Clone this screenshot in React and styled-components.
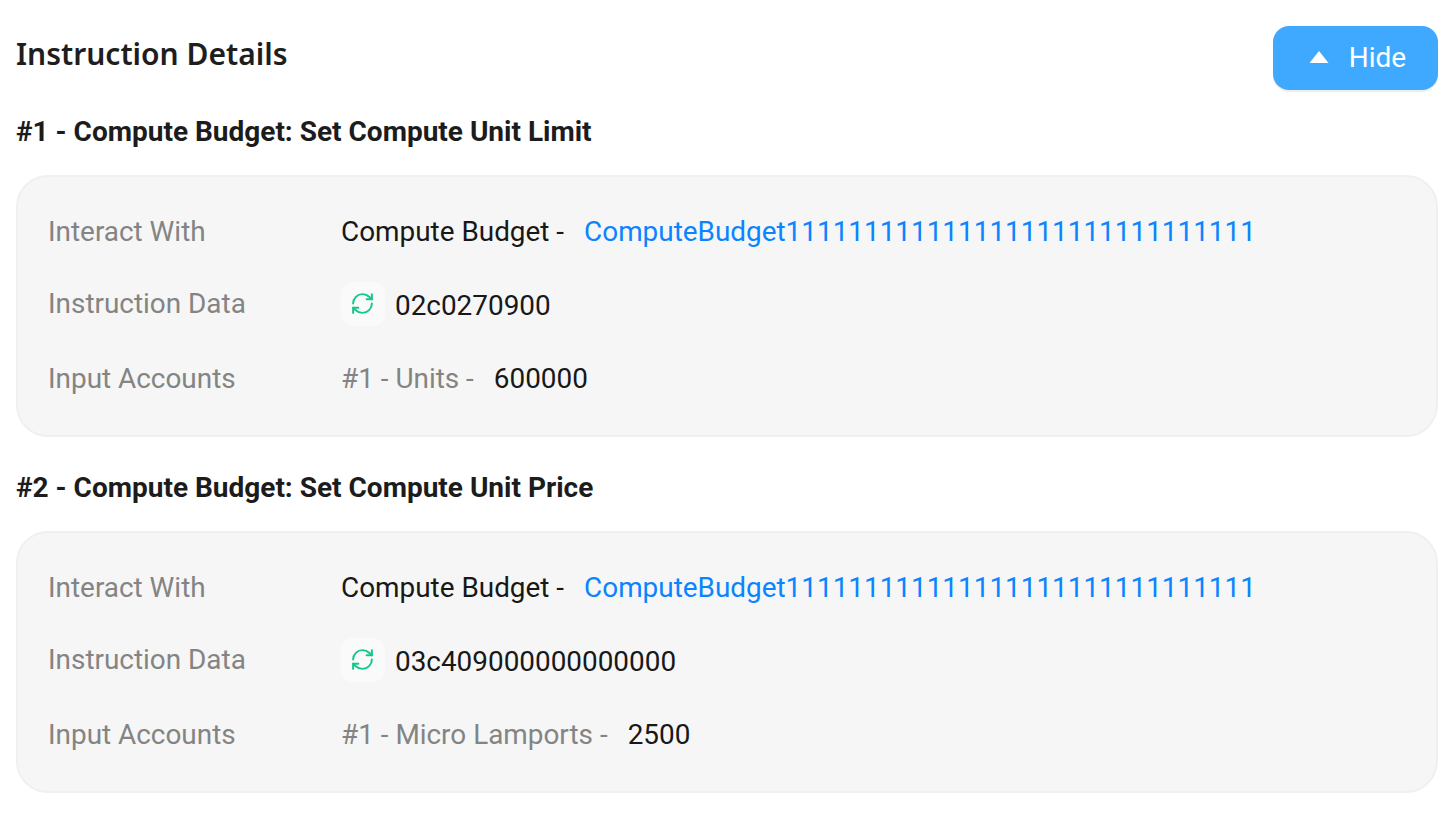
import React from 'react';
import styled, { createGlobalStyle } from 'styled-components';
import { RefreshCw } from 'lucide-react';

const GlobalStyle = createGlobalStyle`
  html, body {
    margin: 0;
    padding: 0;
    background: #fff;
    font-family: Roboto, "Liberation Sans", sans-serif;
  }
`;

const instructions = [
  {
    title: '#1 - Compute Budget: Set Compute Unit Limit',
    data: '02c0270900',
    account: '#1 - Units -',
    value: '600000',
  },
  {
    title: '#2 - Compute Budget: Set Compute Unit Price',
    data: '03c409000000000000',
    account: '#1 - Micro Lamports -',
    value: '2500',
  },
];

const App = () => {
  return (
    <Page>
      <GlobalStyle />
      <Header>
        <Title>Instruction Details</Title>
        <HideButton>
          <Caret viewBox="0 0 20 14">
            <path d="M10 1 L19.5 13 H0.5 Z" fill="#fff" />
          </Caret>
          Hide
        </HideButton>
      </Header>
      {instructions.map((item) => (
        <Section key={item.title}>
          <SectionTitle>{item.title}</SectionTitle>
          <Card>
            <Row>
              <Label>Interact With</Label>
              <Value>
                Compute Budget -
                <ProgramLink href="#">ComputeBudget111111111111111111111111111111</ProgramLink>
              </Value>
            </Row>
            <DataRow>
              <DataLabel>Instruction Data</DataLabel>
              <Value>
                <IconBox>
                  <RefreshCw size={25} color="#14c88c" strokeWidth={1.9} />
                </IconBox>
                <DataText>{item.data}</DataText>
              </Value>
            </DataRow>
            <Row>
              <Label>Input Accounts</Label>
              <Value>
                <Muted>{item.account}</Muted>
                {item.value}
              </Value>
            </Row>
          </Card>
        </Section>
      ))}
    </Page>
  );
};

const Page = styled.div`
  width: 1456px;
  height: 813px;
  box-sizing: border-box;
  padding: 26px 18px 0 16px;
  overflow: hidden;
  color: #1c1c1c;
`;

const Header = styled.div`
  display: flex;
  justify-content: space-between;
  align-items: flex-start;
  height: 64px;
`;

const Title = styled.h2`
  margin: 8px 0 0;
  font-family: "Noto Sans", sans-serif;
  font-size: 30px;
  line-height: 40px;
  font-weight: 600;
  color: #1e1e1e;
`;

const HideButton = styled.button`
  display: flex;
  align-items: center;
  justify-content: center;
  gap: 20px;
  width: 165px;
  height: 64px;
  padding: 0 0 2px 4px;
  border: none;
  border-radius: 16px;
  background: #3fa9ff;
  box-shadow: 0 2px 0 #eeeeee;
  color: #fff;
  font-family: Roboto, sans-serif;
  font-size: 28px;
  cursor: pointer;
`;

const Caret = styled.svg`
  width: 20px;
  height: 14px;
`;

const Section = styled.section`
  margin-bottom: 9px;
`;

const SectionTitle = styled.h3`
  margin: 0;
  height: 85px;
  box-sizing: border-box;
  padding-top: 26px;
  font-family: Roboto, sans-serif;
  font-size: 28px;
  line-height: 32px;
  font-weight: 700;
  color: #1c1c1c;
`;

const Card = styled.div`
  height: 262px;
  box-sizing: border-box;
  padding: 18px 30px 0;
  border: 2px solid #f0f0f0;
  border-radius: 32px;
  background: #f6f6f6;
`;

const Row = styled.div`
  display: flex;
  align-items: center;
  height: 72px;
`;

const DataRow = styled(Row)`
  height: 75px;
`;

const Label = styled.div`
  width: 293px;
  flex-shrink: 0;
  font-size: 27.9px;
  color: #848484;
`;

const DataLabel = styled(Label)`
  margin-bottom: 2px;
`;

const Value = styled.div`
  display: flex;
  align-items: center;
  font-size: 27.9px;
  color: #181818;
  white-space: nowrap;
`;

const ProgramLink = styled.a`
  margin-left: 20px;
  color: #0a84ff;
  text-decoration: none;
`;

const IconBox = styled.span`
  display: flex;
  align-items: center;
  justify-content: center;
  width: 44px;
  height: 44px;
  box-sizing: border-box;
  padding-right: 1px;
  margin: 0 10px 2px 0;
  border-radius: 12px;
  background: #fafafa;
`;

const DataText = styled.span`
  margin-top: 2px;
`;

const Muted = styled.span`
  margin-right: 20px;
  color: #848484;
`;

export default App;
